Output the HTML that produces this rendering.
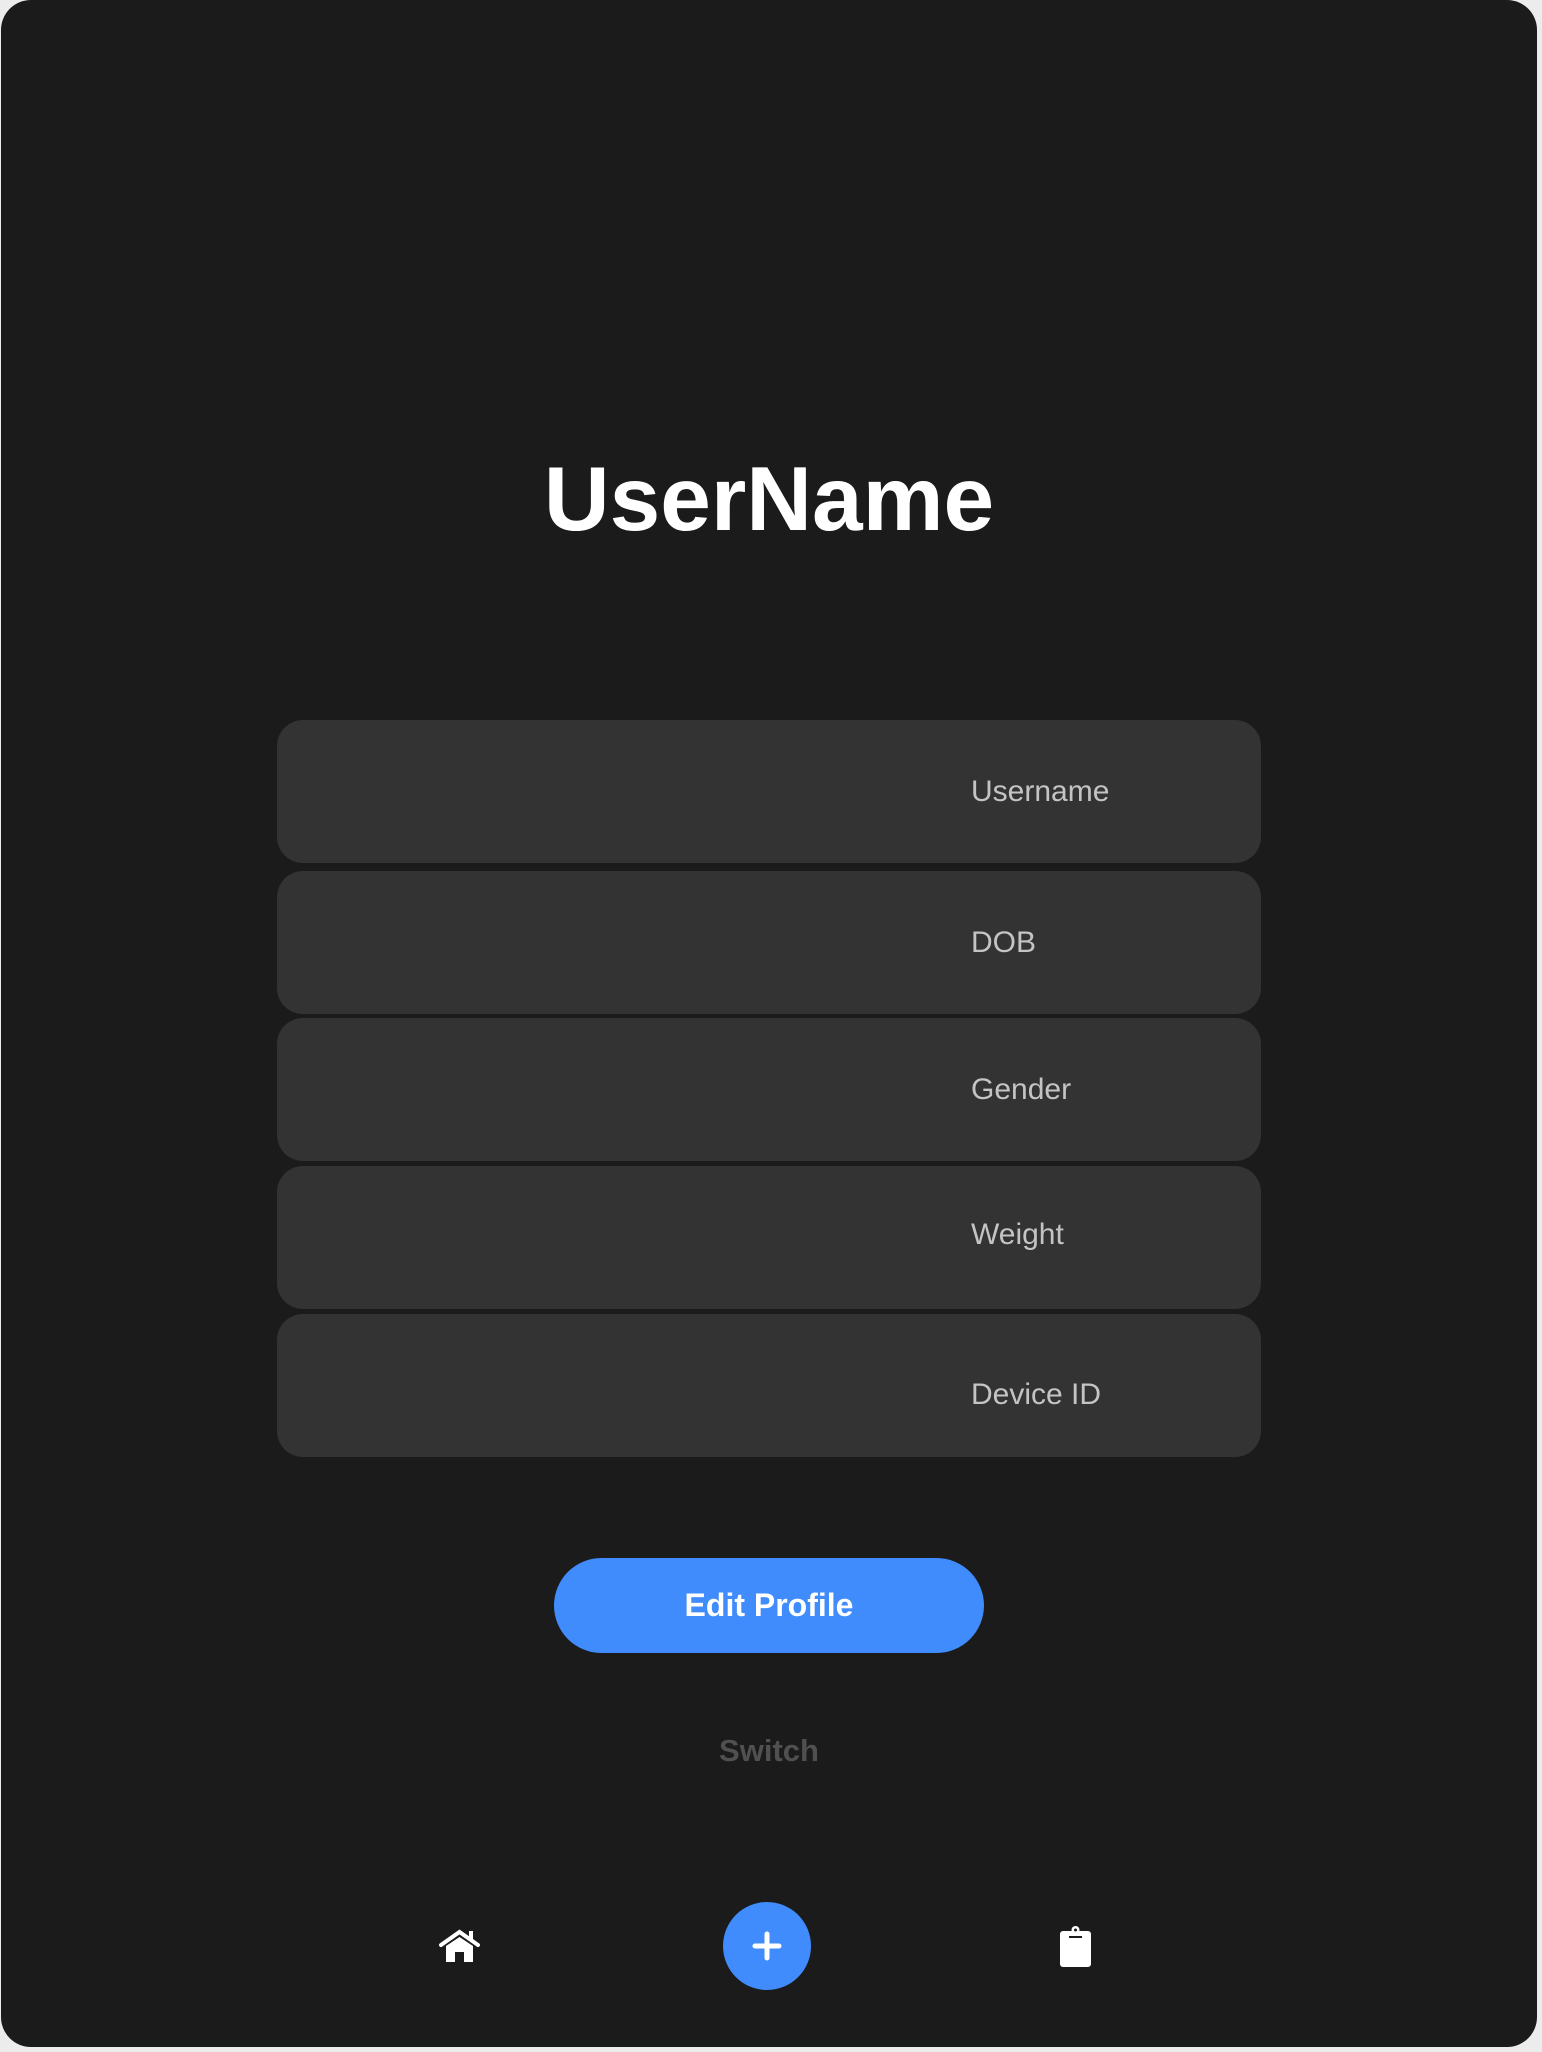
<!DOCTYPE html>
<html><head><meta charset="utf-8"><style>
html,body{margin:0;padding:0;width:1542px;height:2052px;background:#ececec;overflow:hidden;font-family:"Liberation Sans",sans-serif}
.panel{position:absolute;left:1px;top:0;width:1536px;height:2047px;background:#1b1b1b;border-radius:30px}
.title{position:absolute;left:0;width:1538px;top:445px;text-align:center;color:#fff;font-weight:bold;font-size:91px;line-height:110px}
.f{position:absolute;left:277px;width:984px;height:143px;background:#333;border-radius:26px}
.f span{position:absolute;left:694px;top:50%;transform:translateY(-50%);color:#c4c4c4;font-size:30px}
.btn{position:absolute;left:554px;top:1558px;width:430px;height:95px;background:#418cfd;border-radius:48px;color:#fff;font-weight:bold;font-size:32px;text-align:center;line-height:95px}
.sw{position:absolute;left:0;width:1538px;top:1733px;text-align:center;color:#505050;font-weight:bold;font-size:31px}
.plus{position:absolute;left:723px;top:1902px;width:88px;height:88px;border-radius:50%;background:#418cfd}
</style></head><body>
<div class="panel"></div>
<div class="title">UserName</div>
<div class="f" style="top:720px"><span>Username</span></div>
<div class="f" style="top:871px"><span>DOB</span></div>
<div class="f" style="top:1018px"><span>Gender</span></div>
<div class="f" style="top:1166px"><span style="margin-top:-3px">Weight</span></div>
<div class="f" style="top:1314px"><span style="margin-top:9px">Device ID</span></div>
<div class="btn">Edit Profile</div>
<div class="sw">Switch</div>
<svg style="position:absolute;left:439px;top:1929px" width="41" height="34" viewBox="0 0 41 34">
<path d="M2 16 L20.5 3 L39 16" stroke="#fff" stroke-width="4" fill="none" stroke-linecap="round"/>
<rect x="30" y="2" width="4" height="10" fill="#fff"/>
<path d="M7 17 L20.5 8 L34 17 V33 H25 V23 H16 V33 H7 Z" fill="#fff"/>
</svg>
<div class="plus"><svg width="88" height="88" viewBox="0 0 88 88"><path d="M44 32 V56 M32 44 H56" stroke="#fff" stroke-width="5" stroke-linecap="round"/></svg></div>
<svg style="position:absolute;left:1060px;top:1925px" width="31" height="42" viewBox="0 0 31 42">
<rect x="0" y="6" width="31" height="36" rx="3" fill="#fff"/>
<circle cx="15.5" cy="5" r="4" fill="#fff"/>
<rect x="9" y="11" width="13" height="2" fill="#1b1b1b"/>
<circle cx="15.5" cy="5" r="1.5" fill="#1b1b1b"/>
</svg>
</body></html>
